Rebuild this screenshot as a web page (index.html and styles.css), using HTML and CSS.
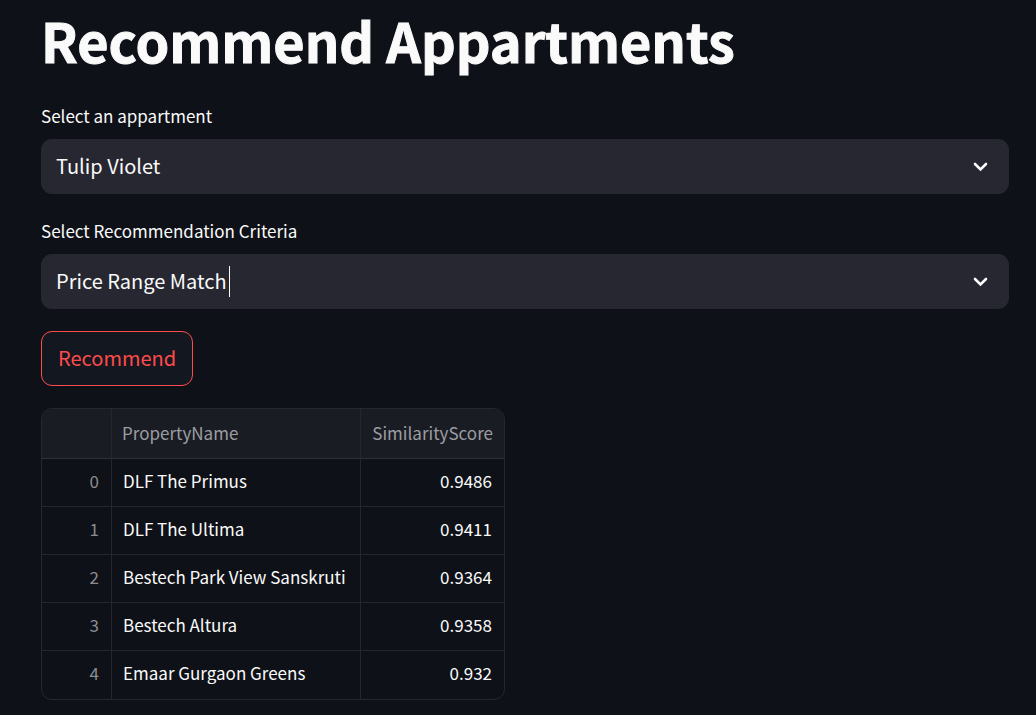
FILE: index.html
```html
<!DOCTYPE html>
<html lang="en">
<head>
  <meta charset="utf-8">
  <meta name="viewport" content="width=device-width, initial-scale=1">
  <title>Recommend Appartments</title>
  <link rel="stylesheet" href="styles.css">
</head>
<body>
  <main class="page">
    <h1 class="title">Recommend Appartments</h1>

    <form class="form">
      <div class="field">
        <label class="field-label" for="apartment">Select an appartment</label>
        <div class="select-box">
          <select class="select" id="apartment">
            <option>Tulip Violet</option>
          </select>
          <svg class="chevron" viewBox="0 0 24 24" aria-hidden="true"><path d="M7 10l5.500 5.500l5.500-5.500"/></svg>
        </div>
      </div>

      <div class="field">
        <label class="field-label" for="criteria">Select Recommendation Criteria</label>
        <div class="select-box">
          <select class="select" id="criteria">
            <option>Price Range Match</option>
          </select>
          <span class="caret" aria-hidden="true"></span>
          <svg class="chevron" viewBox="0 0 24 24" aria-hidden="true"><path d="M7 10l5.500 5.500l5.500-5.500"/></svg>
        </div>
      </div>

      <button class="button" type="button">Recommend</button>
    </form>

    <div class="table-frame">
      <table class="table">
        <thead>
          <tr><th class="index"></th><th class="name">PropertyName</th><th class="score">SimilarityScore</th></tr>
        </thead>
        <tbody>
          <tr><td class="index">0</td><td class="name">DLF The Primus</td><td class="score">0.9486</td></tr>
          <tr><td class="index">1</td><td class="name">DLF The Ultima</td><td class="score">0.9411</td></tr>
          <tr><td class="index">2</td><td class="name">Bestech Park View Sanskruti</td><td class="score">0.9364</td></tr>
          <tr><td class="index">3</td><td class="name">Bestech Altura</td><td class="score">0.9358</td></tr>
          <tr><td class="index">4</td><td class="name">Emaar Gurgaon Greens</td><td class="score">0.932</td></tr>
        </tbody>
      </table>
    </div>
  </main>
</body>
</html>
```
FILE: styles.css
```css
* {
  box-sizing: border-box;
}

body {
  margin: 0;
  background: #0e1117;
  color: #fafafa;
  font-family: "Noto Sans CJK SC", "Noto Sans", sans-serif;
}

.page {
  display: flex;
  flex-direction: column;
  align-items: stretch;
  gap: 22px;
  padding: 7px 27px 15px 41px;
}

.title {
  margin: 0;
  font-size: 54px;
  font-weight: 700;
  line-height: 66px;
  -webkit-text-stroke: 1px #fafafa;
}

.form {
  display: flex;
  flex-direction: column;
  gap: 22px;
  padding-top: 8px;
}

.field {
  display: flex;
  flex-direction: column;
  gap: 10px;
}

.field + .field {
  padding-top: 2px;
}

.field-label {
  font-size: 17px;
  line-height: 26px;
}

.select-box {
  position: relative;
  display: flex;
}

.select {
  appearance: none;
  flex: 1;
  height: 55px;
  padding: 0 52px 2px 15px;
  border: 0;
  border-radius: 11px;
  background: #262730;
  color: #fafafa;
  font-family: inherit;
  font-size: 20px;
  outline: none;
}

.chevron {
  position: absolute;
  top: 15px;
  right: 17px;
  width: 24px;
  height: 24px;
  fill: none;
  stroke: #fafafa;
  stroke-width: 2.6;
  stroke-linecap: round;
  pointer-events: none;
}

.caret {
  position: absolute;
  top: 12px;
  left: 188px;
  width: 1px;
  height: 31px;
  background: #fafafa;
}

.button {
  align-self: flex-start;
  height: 55px;
  padding: 0 16px 2px;
  border: 1px solid #ff4b4b;
  border-radius: 11px;
  background: #131720;
  color: #ff4b4b;
  font-family: inherit;
  font-size: 20px;
}

.table-frame {
  align-self: flex-start;
  overflow: hidden;
  border: 1px solid #25272d;
  border-radius: 11px;
}

.table {
  border-collapse: separate;
  border-spacing: 0;
  font-size: 17px;
  line-height: 24px;
}

.table th,
.table td {
  height: 48px;
  padding: 0 12px 4px 11px;
  border-bottom: 1px solid #25272d;
  font-weight: 400;
  text-align: left;
  white-space: nowrap;
}

.table th {
  height: 50px;
  padding: 0 11px 2px 10px;
  border-color: #2d3036;
  background: #1a1c24;
  color: #9c9da1;
}

.table .index {
  width: 70px;
  border-right: 1px solid #25272d;
  color: #8b8c90;
  text-align: right;
}

.table .name {
  width: 249px;
  border-right: 1px solid #25272d;
}

.table .score {
  width: 143px;
  text-align: right;
}

.table tr:last-child td {
  border-bottom: 0;
}
```
